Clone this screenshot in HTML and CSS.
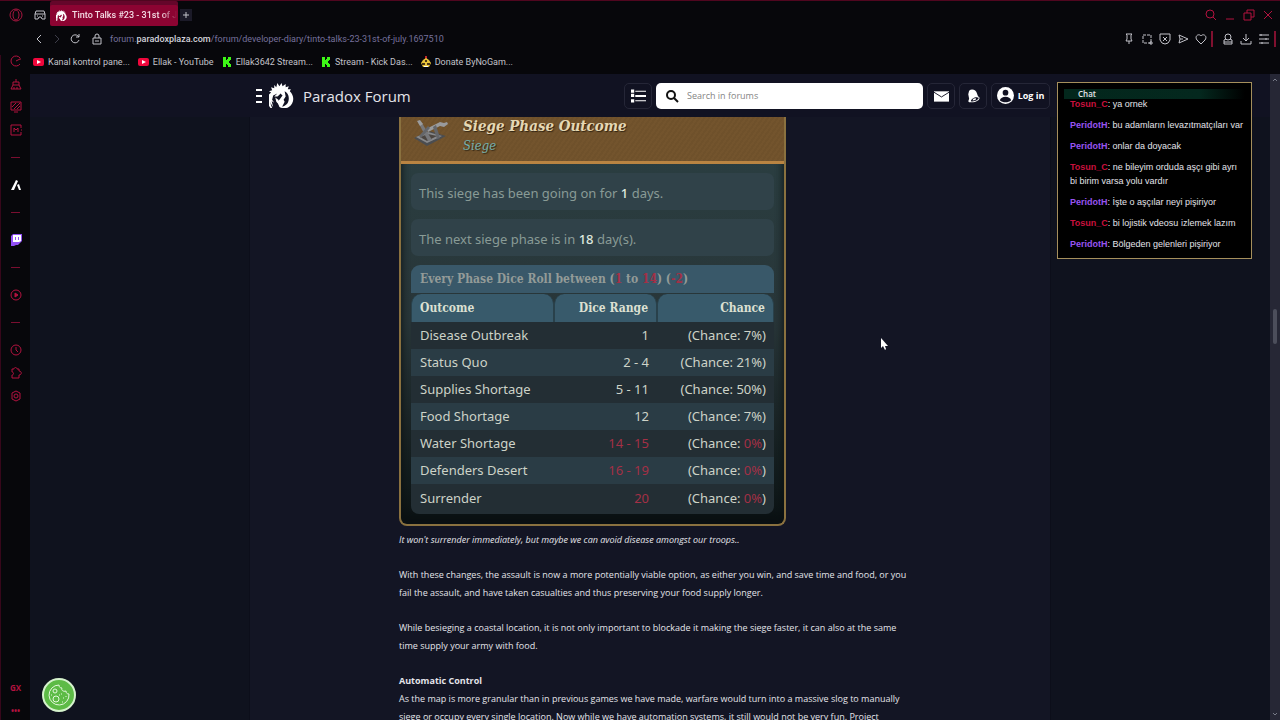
FILE: index.html
```html
<!DOCTYPE html>
<html lang="en">
<head>
    <meta charset="UTF-8">
    <meta name="viewport" content="width=device-width, initial-scale=1.0">
    <title>Tinto Talks #23 - 31st of July</title>
    <link rel="stylesheet" href="styles.css">
</head>
<body>
    <svg class="sprite" aria-hidden="true">
        <symbol id="paradox" viewBox="0 0 24 24">
            <path fill="currentColor" d="M2 9L0 8l3-1-1-3 3 1 0-3 2 2 1-4 2 3 2-3 1 3 3-2 0 3 3-1-1 3 3 0-1 2c5 5 4 12-1 15-3 2-7 1-9 0 5 0 9-3 9-8 0-4-2-6-4-7l1 5-2 3 1 2-3 6-2-1-2-5 2-2 3-4-2-2-3 3-3 0 3-3-4 2-1 4 2 3-3-2c-1 3 0 5 2 9-4-2-7-9-5-14z"/>
            <path fill="currentColor" d="M1 11c-1 5 0 8 3 12-1-4-2-6-1-10zM8 9l3 1-3 3zM6 14l3 2 1 5-3-3z"/>
        </symbol>
        <symbol id="youtube" viewBox="0 0 11 8">
            <rect width="11" height="8" rx="2" fill="#f0073c"/>
            <path d="M4 2l4 2-4 2z" fill="#fff"/>
        </symbol>
        <symbol id="kick" viewBox="0 0 8 10">
            <path d="M0 0h3v3h1V2h1V0h3v3H7v1H6v2h1v1h1v3H5V8H4V7H3v3H0z" fill="#3df716"/>
        </symbol>
    </svg>

    <header class="browser">
        <div class="tabs">
            <svg class="opera" viewBox="0 0 14 14"><circle cx="7" cy="7" r="6"/><ellipse cx="7" cy="7" rx="3" ry="5"/></svg>
            <svg class="icon workspace" viewBox="0 0 12 12"><path d="M2 2h8l1 3v5H8L7 8H5l-1 2H1V5zM1 5h10M3 7h1M8 7h1"/></svg>
            <div class="tab">
                <svg class="tab-logo"><use href="#paradox"/></svg>
                <span>Tinto Talks #23 - 31st of J</span>
            </div>
            <button class="new-tab" aria-label="New tab"><svg class="icon" viewBox="0 0 12 12"><path d="M6 3v6M3 6h6"/></svg></button>
            <div class="window-buttons">
                <button aria-label="Search tabs"><svg class="icon" viewBox="0 0 12 12"><circle cx="5" cy="5" r="4"/><path d="M8 8l3 3"/></svg></button>
                <button aria-label="Minimize"><svg class="icon" viewBox="0 0 12 12"><path d="M2 10h8"/></svg></button>
                <button aria-label="Restore"><svg class="icon" viewBox="0 0 12 12"><path d="M1 4h7v7H1zM4 4V1h7v7H8"/></svg></button>
                <button aria-label="Close"><svg class="icon" viewBox="0 0 12 12"><path d="M2 2l8 8M10 2l-8 8"/></svg></button>
            </div>
        </div>
        <div class="address">
            <button aria-label="Back"><svg class="icon" viewBox="0 0 12 12"><path d="M8 2L4 6l4 4"/></svg></button>
            <button class="off" aria-label="Forward"><svg class="icon" viewBox="0 0 12 12"><path d="M4 2l4 4-4 4"/></svg></button>
            <button aria-label="Reload"><svg class="icon" viewBox="0 0 12 12"><path d="M10 7a4 4 0 1 1-1-4l1 1M10 1v3H7"/></svg></button>
            <svg class="icon lock" viewBox="0 0 12 12"><path d="M2 5h8v6H2zM4 5V3a2 2 0 0 1 4 0v2M4 8h4"/></svg>
            <span class="url">forum.<b>paradoxplaza.com</b>/forum/developer-diary/tinto-talks-23-31st-of-july.1697510</span>
            <div class="tools">
                <button aria-label="Pin"><svg class="icon" viewBox="0 0 12 12"><path d="M3 1h6L8 2v4l1 2H3l1-2V2zM6 8v3"/></svg></button>
                <button aria-label="Snapshot"><svg class="icon" viewBox="0 0 12 12"><path stroke-dasharray="3 1" d="M2 2h8v8H2z"/><path d="M10 8v4M8 10h4"/></svg></button>
                <button aria-label="Ad blocker"><svg class="icon" viewBox="0 0 12 12"><path d="M1 1h10v6l-2 3-3 1-3-1-2-3zM4 4l4 4M8 4L4 8"/></svg></button>
                <button aria-label="Send"><svg class="icon" viewBox="0 0 12 12"><path d="M2 2l9 4-9 4 1-4zM3 6h3"/></svg></button>
                <button aria-label="Save"><svg class="icon" viewBox="0 0 12 12"><path d="M6 11L2 7C-1 3 4 0 6 3c2-3 7 0 4 4z"/></svg></button>
                <i class="bar"></i>
                <button aria-label="Profile"><svg class="icon" viewBox="0 0 12 12"><circle cx="6" cy="4" r="3"/><path d="M4 6L2 7v4h8V7L8 6M2 9h8"/></svg></button>
                <button aria-label="Downloads"><svg class="icon" viewBox="0 0 12 12"><path d="M6 1v6M3 5l3 3 3-3M1 8v3h10V8"/></svg></button>
                <button aria-label="Settings"><svg class="icon" viewBox="0 0 12 12"><path d="M1 2h10M1 6h10M1 10h10M3 1v2M8 5v2M4 9v2"/></svg></button>
                <i class="bar"></i>
            </div>
        </div>
        <nav class="bookmarks">
            <a href="#"><svg class="yt"><use href="#youtube"/></svg>Kanal kontrol pane...</a>
            <a href="#"><svg class="yt"><use href="#youtube"/></svg>Ellak - YouTube</a>
            <a href="#"><svg class="kick"><use href="#kick"/></svg>Ellak3642 Stream...</a>
            <a href="#"><svg class="kick"><use href="#kick"/></svg>Stream - Kick Das...</a>
            <a href="#"><svg class="donate" viewBox="0 0 10 12"><path d="M4 0h2v3H4z" fill="#c1272d"/><path d="M2 4l3-2 3 2 2 3-2 4H2L0 7z" fill="#e8c33a"/><path d="M1 7h3v2H1zM6 7h3v2H6zM4 4h2v2H4z" fill="#4a3617"/><path d="M3 10h4v1H3z" fill="#fff"/></svg>Donate ByNoGam...</a>
        </nav>
    </header>

    <div class="workspace-area">
        <aside class="sidebar">
            <button aria-label="Speed dial"><svg class="icon" viewBox="0 0 12 12"><path d="M10 9a5 5 0 1 1 0-6M6 6l4-2h1"/></svg></button>
            <button aria-label="Cleaner"><svg class="icon" viewBox="0 0 12 12"><path d="M6 1v3M3 4h6v3H3zM3 7l-2 4h10L9 7M4 11V9M7 11V9"/></svg></button>
            <button aria-label="Mods"><svg class="icon" viewBox="0 0 12 12"><path d="M1 1h10v8H1zM4 11h4M2 6l4-4M4 8l6-6M7 8l3-3"/></svg></button>
            <button aria-label="Music"><svg class="icon" viewBox="0 0 12 12"><path d="M11 4V1H1v10h10V8M4 8V4l2 2 2-2v4M11 6h1"/></svg></button>
            <hr>
            <button class="aria" aria-label="Aria"><svg viewBox="0 0 12 12"><path d="M6 1l2 1-4 9H1zM7 6l2-1 2 6H9z" fill="#fff"/></svg></button>
            <hr>
            <button aria-label="Twitch"><svg viewBox="0 0 12 12"><path d="M1 2l2-2h9v7l-4 4H6l-2 1H1z" fill="#9250f5"/><path d="M3 1h8v6L9 8H3z" fill="#fff"/><path d="M5 3h1v3H5zM8 3h1v3H8z" fill="#9250f5"/></svg></button>
            <hr>
            <button aria-label="Player"><svg class="icon" viewBox="0 0 12 12"><circle cx="6" cy="6" r="5"/><path d="M5 4l3 2-3 2z" fill="currentColor"/></svg></button>
            <hr>
            <button aria-label="History"><svg class="icon" viewBox="0 0 12 12"><circle cx="6" cy="6" r="5"/><path d="M6 3v3l2 2"/></svg></button>
            <button aria-label="Extensions"><svg class="icon" viewBox="0 0 12 12"><path d="M2 2h2c0-2 3-2 3 0h2v2c3 0 3 4 0 4v3H2V8c2 0 2-3 0-3z"/></svg></button>
            <button aria-label="Settings"><svg class="icon" viewBox="0 0 12 12"><path d="M6 1l4 2v6l-4 2-4-2V3z"/><circle cx="6" cy="6" r="2"/></svg></button>
            <div class="sidebar-end">
                <button class="gx">GX</button>
                <button aria-label="More">•••</button>
            </div>
        </aside>

        <div class="page">
            <header class="forum-header">
                <div class="inner">
                    <button class="menu" aria-label="Menu"><i></i><i></i><i></i></button>
                    <svg class="forum-logo"><use href="#paradox"/></svg>
                    <a class="brand" href="#">Paradox Forum</a>
                    <div class="actions">
                        <button class="box" aria-label="Forum list"><svg viewBox="0 0 14 12"><path d="M0 0h3v3H0zM4 1h10v1H4zM0 4h3v3H0zM4 5h10v2H4zM0 9h3v3H0zM4 10h10v1H4z" fill="#fff"/></svg></button>
                        <label class="search">
                            <svg viewBox="0 0 14 14"><circle cx="6" cy="6" r="4"/><path d="M9 9l4 4"/></svg>
                            <input type="text" placeholder="Search in forums" aria-label="Search in forums">
                        </label>
                        <button class="box" aria-label="Messages"><svg viewBox="0 0 16 12"><path d="M0 1h16v11H0z" fill="#fff"/><path d="M0 2l8 5 8-5" fill="none" stroke="#111122"/></svg></button>
                        <button class="box" aria-label="Alerts"><svg viewBox="0 0 16 16"><path d="M3 2C6-1 11 1 12 5l1 3 2 2c0 3-5 6-12 5l-1-1 1-3-1-5z" fill="#fff"/><path d="M5 14c0-3 6-6 9-4 0 2-5 5-9 4z" fill="#111122"/><path d="M7 13c0-2 3-3 4-2 0 1-2 2-4 2z" fill="#fff"/></svg></button>
                        <button class="box login"><svg viewBox="0 0 18 18"><circle cx="9" cy="9" r="9" fill="#fff"/><circle cx="9" cy="6" r="3" fill="#111122"/><path d="M3 14c1-5 11-5 12 0-3 3-9 3-12 0z" fill="#111122"/></svg>Log in</button>
                    </div>
                </div>
            </header>

            <main class="thread">
                <article class="post">
                    <section class="siege">
                        <header class="siege-head">
                            <svg class="catapult" viewBox="0 0 36 28"><path d="M1 19l15-7 17 5-19 10z" fill="#4b4d50"/><path d="M3 18l12-5 14 4-15 7z" fill="#88898b"/><path d="M7 18l8-3 9 2-10 5z" fill="#4b4540"/><path d="M5 3l4 1 10 17-4 1z" fill="#77787b"/><path d="M13 10l14-7 4 1 3-1 1 2-4 3-4-1-12 6z" fill="#999a9c"/><path d="M20 8l3-2 4 13-3 1zM6 17l9-10 2 2L8 19z" fill="#64666a"/><path d="M4 2l3-1 3 4-3 2z" fill="#9b9c9d"/></svg>
                            <div>
                                <h2>Siege Phase Outcome</h2>
                                <h3>Siege</h3>
                            </div>
                        </header>
                        <div class="siege-body">
                            <p class="note">This siege has been going on for <b>1</b> days.</p>
                            <p class="note">The next siege phase is in <b>18</b> day(s).</p>
                            <table>
                                <caption>Every Phase Dice Roll between (<b>1</b> to <b>14</b>) (<b>-2</b>)</caption>
                                <thead>
                                    <tr><th>Outcome</th><th>Dice Range</th><th>Chance</th></tr>
                                </thead>
                                <tbody>
                                    <tr><td>Disease Outbreak</td><td>1</td><td>(Chance: 7%)</td></tr>
                                    <tr><td>Status Quo</td><td>2 - 4</td><td>(Chance: 21%)</td></tr>
                                    <tr><td>Supplies Shortage</td><td>5 - 11</td><td>(Chance: 50%)</td></tr>
                                    <tr><td>Food Shortage</td><td>12</td><td>(Chance: 7%)</td></tr>
                                    <tr><td>Water Shortage</td><td class="bad">14 - 15</td><td>(Chance: <span class="bad">0%</span>)</td></tr>
                                    <tr><td>Defenders Desert</td><td class="bad">16 - 19</td><td>(Chance: <span class="bad">0%</span>)</td></tr>
                                    <tr><td>Surrender</td><td class="bad">20</td><td>(Chance: <span class="bad">0%</span>)</td></tr>
                                </tbody>
                            </table>
                        </div>
                    </section>
                    <p><em>It won't surrender immediately, but maybe we can avoid disease amongst our troops..</em></p>
                    <p>With these changes, the assault is now a more potentially viable option, as either you win, and save time and food, or you<br>fail the assault, and have taken casualties and thus preserving your food supply longer.</p>
                    <p>While besieging a coastal location, it is not only important to blockade it making the siege faster, it can also at the same<br>time supply your army with food.</p>
                    <p><strong>Automatic Control</strong><br>As the map is more granular than in previous games we have made, warfare would turn into a massive slog to manually<br>siege or occupy every single location. Now while we have automation systems, it still would not be very fun. Project</p>
                </article>
            </main>

            <section class="chat">
                <h4>Chat</h4>
                <div class="messages">
                    <p><b class="tosun">Tosun_C</b>: ya ornek</p>
                    <p><b>PeridotH</b>: bu adamların levazıtmatçıları var</p>
                    <p><b>PeridotH</b>: onlar da doyacak</p>
                    <p><b class="tosun">Tosun_C</b>: ne bileyim orduda aşçı gibi ayrı<br>bi birim varsa yolu vardır</p>
                    <p><b>PeridotH</b>: İşte o aşçılar neyi pişiriyor</p>
                    <p><b class="tosun">Tosun_C</b>: bi lojistik vdeosu izlemek lazım</p>
                    <p><b>PeridotH</b>: Bölgeden gelenleri pişiriyor</p>
                </div>
            </section>

            <button class="cookie" aria-label="Cookie settings">
                <svg viewBox="0 0 24 24"><path d="M12 2a10 10 0 1 0 10 9c-2 0-3-1-3-3-3 1-5-1-4-3-2 0-3-1-3-3z"/><circle cx="8" cy="8" r="2"/><circle cx="9" cy="16" r="3"/><path d="M14 11h1M16 15h1M4 12h1M15 19h1M12 12h1M19 13v1"/></svg>
            </button>
            <svg class="cursor" viewBox="0 0 8 12"><path d="M1 0v10l2-2 2 4 1-1-1-3h3z" fill="#fff"/></svg>
        </div>

        <div class="scrollbar">
            <svg viewBox="0 0 6 6"><path d="M1 4l2-2 2 2"/></svg>
            <i></i>
            <svg class="down" viewBox="0 0 6 6"><path d="M1 2l2 2 2-2"/></svg>
        </div>
    </div>
</body>
</html>
```

FILE: styles.css
```css
* {
    box-sizing: border-box;
}

body {
    margin: 0;
    height: 100vh;
    overflow: hidden;
    display: flex;
    flex-direction: column;
    background-color: #07070b;
    color: #e4e4ea;
    font-family: 'Open Sans', sans-serif;
    font-size: 9px;
}

button {
    display: flex;
    align-items: center;
    justify-content: center;
    padding: 0;
    border: none;
    background: none;
    color: inherit;
    font: inherit;
    cursor: pointer;
}

a {
    color: inherit;
    text-decoration: none;
}

.sprite {
    position: absolute;
    width: 0;
    height: 0;
}

.icon {
    width: 12px;
    height: 12px;
    fill: none;
    stroke: currentColor;
}

/* browser chrome */
.browser {
    flex: none;
    height: 74px;
    border-top: 1px solid #50061f;
    background-color: #07070b;
    font-family: Roboto, sans-serif;
    color: #c3c3ca;
}

.tabs {
    display: flex;
    align-items: center;
    height: 28px;
    padding: 0 6px 0 9px;
}

.opera {
    width: 14px;
    height: 14px;
    fill: none;
    stroke: #a8163f;
    margin-right: 11px;
}

.workspace {
    margin-right: 4px;
}

.tab {
    display: flex;
    align-items: center;
    gap: 5px;
    width: 128px;
    height: 21px;
    padding-left: 6px;
    border-radius: 2px;
    background-color: #8c0432;
    box-shadow: 0 -4px 0 #65062a;
    color: #f3dbe3;
    font-weight: 500;
    white-space: nowrap;
}

.tab span {
    flex: none;
    -webkit-mask-image: linear-gradient(90deg, #000 85%, transparent);
    mask-image: linear-gradient(90deg, #000 85%, transparent);
}

.tab-logo {
    flex: none;
    width: 11px;
    height: 11px;
    color: #fff;
}

.new-tab {
    width: 12px;
    height: 12px;
    margin-left: 2px;
    background-color: #1b1a28;
}

.window-buttons {
    display: flex;
    gap: 7px;
    margin-left: auto;
    color: #b3123f;
}

.address {
    display: flex;
    align-items: center;
    height: 19px;
    padding: 0 4px 0 33px;
    gap: 6px;
}

.address .off {
    color: #3d3d49;
}

.lock {
    margin: 0 1px 0 4px;
}

.url {
    color: #76719c;
}

.url b {
    color: #d3d3db;
    font-weight: 500;
}

.tools {
    display: flex;
    align-items: center;
    gap: 6px;
    margin-left: auto;
}

.bar {
    width: 2px;
    height: 16px;
    background-color: #80102f;
}

.tools .bar {
    margin: 0 3px 0 -2px;
}

.tools .bar:last-child {
    margin-right: 0;
}

.bookmarks {
    display: flex;
    align-items: center;
    gap: 8px;
    height: 27px;
    padding-left: 33px;
}

.bookmarks a {
    display: flex;
    align-items: center;
    gap: 4px;
}

.yt {
    width: 11px;
    height: 8px;
}

.kick {
    width: 10px;
    height: 10px;
}

.donate {
    width: 10px;
    height: 12px;
}

.workspace-area {
    flex: 1;
    min-height: 0;
    display: flex;
}

.sidebar {
    flex: none;
    display: flex;
    flex-direction: column;
    align-items: center;
    gap: 11px;
    width: 30px;
    padding-bottom: 4px;
    border-left: 1px solid #37071b;
    color: #b3123f;
    margin-top: -19px;
    background-color: #07070b;
}

.sidebar button {
    flex: none;
    height: 12px;
}

.sidebar svg {
    width: 12px;
    height: 12px;
}

.sidebar hr {
    flex: none;
    width: 9px;
    height: 1px;
    margin: 10px 0;
    border: none;
    background-color: #7a0e30;
}

.sidebar-end {
    display: flex;
    flex-direction: column;
    gap: 11px;
    margin-top: auto;
    font-size: 8px;
    font-weight: bold;
}

/* forum page */
.page {
    position: relative;
    flex: 1;
    min-width: 0;
    display: flex;
    flex-direction: column;
    background-color: #0f121e;
}

.forum-header {
    flex: none;
    background-color: #111222;
}

.inner {
    display: flex;
    align-items: center;
    max-width: 800px;
    height: 43px;
    margin: 0 auto;
    padding-left: 6px;
}

.menu {
    flex-direction: column;
    gap: 4px;
    margin-right: 7px;
}

.menu i {
    width: 6px;
    height: 2px;
    background-color: #fff;
}

.forum-logo {
    width: 25px;
    height: 25px;
    color: #fff;
    margin-right: 9px;
}

.brand {
    font-size: 15px;
}

.actions {
    display: flex;
    gap: 4px;
    margin-left: auto;
}

.box {
    width: 28px;
    height: 26px;
    border: 1px solid #252637;
    border-radius: 5px;
    color: #fff;
}

.box svg {
    width: 15px;
    height: 14px;
}

.box.login {
    gap: 4px;
    width: 59px;
    font-weight: bold;
}

.box.login svg {
    width: 17px;
    height: 17px;
}

.search {
    display: flex;
    align-items: center;
    gap: 8px;
    width: 267px;
    height: 26px;
    padding: 0 9px;
    border-radius: 5px;
    background-color: #fff;
}

.search svg {
    width: 14px;
    height: 14px;
    fill: none;
    stroke: #111;
    stroke-width: 2;
}

.search input {
    flex: 1;
    min-width: 0;
    padding: 0;
    border: none;
    outline: none;
    background: none;
    font: inherit;
}

.search input::placeholder {
    color: #858585;
}

.thread {
    flex: 1;
    min-height: 0;
    width: 100%;
    max-width: 802px;
    margin: 0 auto;
    padding: 0 140px 0 149px;
    overflow: hidden;
    border: solid #0c0e1a;
    border-width: 0 1px;
    background-color: #131524;
}

.post p {
    margin: 0 0 17px;
    line-height: 18px;
    white-space: nowrap;
}

.post .siege {
    max-width: 387px;
    margin-bottom: 5px;
    border: solid #8a713f;
    border-width: 0 2px 2px;
    border-radius: 0 0 8px 8px;
    background: linear-gradient(#2b4043, #283538 50%, #10191a 92%, #0b1113);
    box-shadow: inset 0 -8px 8px #0a1012;
    color: #cdd3c8;
    font-family: 'Noto Sans', sans-serif;
    font-size: 13px;
}

.siege-head {
    display: flex;
    gap: 14px;
    height: 47px;
    padding: 0 12px;
    border-bottom: 3px solid #b98442;
    background: repeating-linear-gradient(125deg, #6f512b 0 2px, #73542d 2px 4px);
}

.catapult {
    width: 36px;
    height: 32px;
}

.siege h2,
.siege h3,
.siege caption,
.siege th {
    font-family: 'DejaVu Serif Condensed', 'DejaVu Serif', serif;
}

.siege h2,
.siege h3 {
    margin: 0;
    line-height: 19px;
    font-style: italic;
    text-shadow: 1px 1px 1px #302413;
}

.siege h2 {
    font-size: 15px;
    color: #e5d8b4;
}

.siege h3 {
    font-size: 13px;
    font-weight: normal;
    color: #74b0ad;
}

.siege-body {
    padding: 9px 10px 10px;
}

.siege .note {
    margin: 0 0 9px;
    padding: 3px 8px 0;
    border-radius: 7px;
    background-color: #304249;
    line-height: 34px;
    color: #899b96;
}

.note b {
    color: #dfe8df;
    font-weight: 500;
}

.siege table {
    width: 100%;
    border-collapse: separate;
    border-spacing: 0;
    table-layout: fixed;
    border-radius: 0 0 8px 8px;
    overflow: hidden;
    line-height: 27px;
}

.siege caption {
    height: 28px;
    margin-bottom: 1px;
    padding-left: 9px;
    border-radius: 9px 9px 0 0;
    background-color: #395869;
    color: #939b98;
    font-size: 12px;
    font-weight: bold;
    line-height: 28px;
    text-align: left;
}

.siege caption b,
.siege .bad {
    color: #a43046;
}

.siege th {
    padding: 0 8px;
    border: solid #29414b;
    border-width: 0 1px;
    border-radius: 10px 10px 0 0;
    background-color: #385a6b;
    color: #dce0d2;
    font-size: 12px;
    line-height: 28px;
    text-align: right;
}

.siege td {
    padding: 0 8px;
    text-align: right;
}

.siege th:first-child,
.siege td:first-child {
    width: 143px;
    text-align: left;
}

.siege td:first-child {
    padding-left: 9px;
}

.siege th:nth-child(2) {
    width: 103px;
}

.siege tbody tr {
    background-color: #232e34;
}

.siege tbody tr:nth-child(even) {
    background-color: #2a3c45;
}

.siege tbody tr:last-child td {
    padding-top: 1px;
    padding-bottom: 2px;
}

/* stream chat over the page */
.chat {
    position: absolute;
    top: 8px;
    right: 18px;
    width: 195px;
    height: 177px;
    padding: 6px;
    border: 1px solid #a58f5c;
    background-color: #000;
    overflow: hidden;
    font-family: 'Liberation Sans', sans-serif;
}

.chat h4 {
    position: relative;
    margin: 0;
    padding-left: 14px;
    background: linear-gradient(90deg, #03271c, #04281e 75%, #000);
    font-family: 'Open Sans', sans-serif;
    font-size: 8px;
    font-weight: 600;
    line-height: 10px;
}

.messages {
    display: flex;
    flex-direction: column;
    gap: 7px;
    margin-top: -2px;
    padding-left: 6px;
    white-space: nowrap;
}

.messages p {
    margin: 0;
    line-height: 14px;
}

.messages b {
    color: #9853f2;
}

.messages .tosun {
    color: #c9103d;
}

.cookie {
    position: absolute;
    left: 12px;
    bottom: 8px;
    width: 34px;
    height: 34px;
    border: 2px solid #d5f2cc;
    border-radius: 50%;
    background-color: #5dbb46;
}

.cookie svg {
    width: 24px;
    height: 24px;
    fill: none;
    stroke: #e4f8dc;
}

.cursor {
    position: absolute;
    left: 850px;
    top: 264px;
    width: 8px;
    height: 12px;
}

.scrollbar {
    flex: none;
    display: flex;
    flex-direction: column;
    align-items: center;
    width: 10px;
    padding: 3px 0;
    background-color: #262735;
}

.scrollbar svg {
    width: 6px;
    height: 6px;
    fill: none;
    stroke: #777a87;
}

.scrollbar i {
    width: 4px;
    height: 35px;
    margin-top: 226px;
    border-radius: 2px;
    background-color: #4c4e5b;
}

.scrollbar .down {
    margin-top: auto;
}
```
